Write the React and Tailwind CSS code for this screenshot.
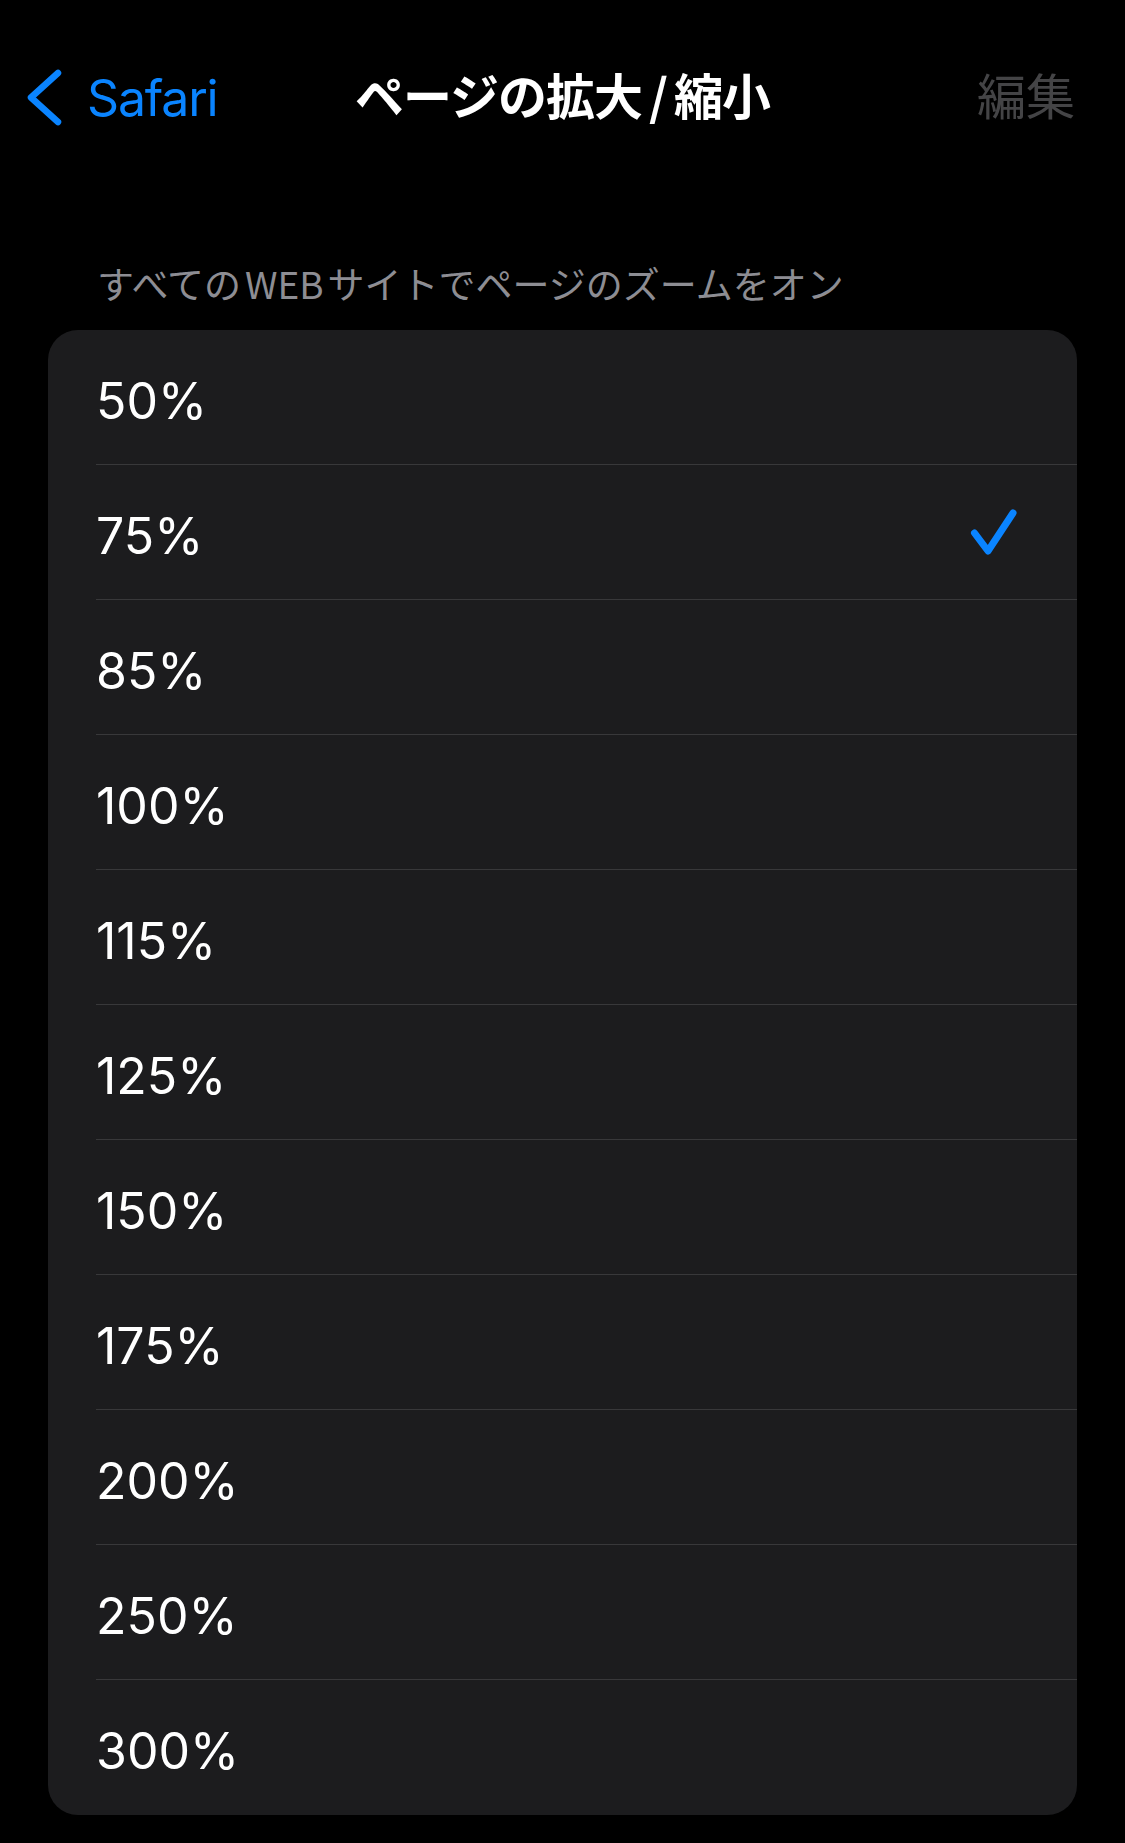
import React from "react";

const items = ["50%", "75%", "85%", "100%", "115%", "125%", "150%", "175%", "200%", "250%", "300%"];

function Check() {
  return (
    <svg width="50" height="50" viewBox="0 0 50 50" fill="none">
      <polyline
        points="6.5,26 20,44 45,6"
        stroke="#0a84ff"
        strokeWidth="7"
        strokeLinecap="round"
        strokeLinejoin="round"
      />
    </svg>
  );
}

function Chevron() {
  return (
    <svg width="40" height="62" viewBox="0 0 40 62" fill="none">
      <polyline
        points="33,6 6,30.5 33,55"
        stroke="#0a84ff"
        strokeWidth="6.5"
        strokeLinecap="round"
        strokeLinejoin="round"
      />
    </svg>
  );
}

export default function App() {
  const jp = { fontFamily: '"Noto Sans CJK JP", "Noto Sans", sans-serif' };
  const latin = { fontFamily: 'Inter, "Noto Sans CJK JP", sans-serif' };
  return (
    <div className="w-[1125px] h-[1843px] bg-black overflow-hidden">
      <div className="mt-[43px] h-[110px] grid grid-cols-[1fr_auto_1fr] items-center">
        <div className="flex items-center pl-[25px]">
          <Chevron />
          <span
            className="ml-[22px] text-[50px] leading-none text-[#0a84ff] tracking-[-1.2px]"
            style={latin}
          >
            Safari
          </span>
        </div>
        <div
          className="pb-[9px] text-[49px] leading-none font-bold text-white tracking-[-1px]"
          style={jp}
        >
          ページの拡大<span className="mx-[7px]">/</span>縮小
        </div>
        <div className="flex justify-end pr-[50px] pb-[9px]">
          <span className="text-[49px] leading-none text-[#444446]" style={jp}>
            編集
          </span>
        </div>
      </div>

      <div
        className="mt-[111px] mb-[28px] pl-[97px] text-[37px] leading-[38px] text-[#8d8d93]"
        style={jp}
      >
        すべての<span className="mx-[4px]">WEB</span>サイトでページのズームをオン
      </div>

      <div className="mx-[48px] rounded-[30px] bg-[#1c1c1e] overflow-hidden">
        {items.map((it, i) => (
          <div
            key={it}
            className={
              "ml-[48px] h-[135px] flex items-center justify-between pr-[59px] " +
              (i < items.length - 1 ? "border-b border-[#38383a]" : "")
            }
          >
            <span className="pt-[7px] text-[50px] leading-none text-white" style={latin}>
              {it}
            </span>
            {it === "75%" ? <Check /> : null}
          </div>
        ))}
      </div>
    </div>
  );
}
